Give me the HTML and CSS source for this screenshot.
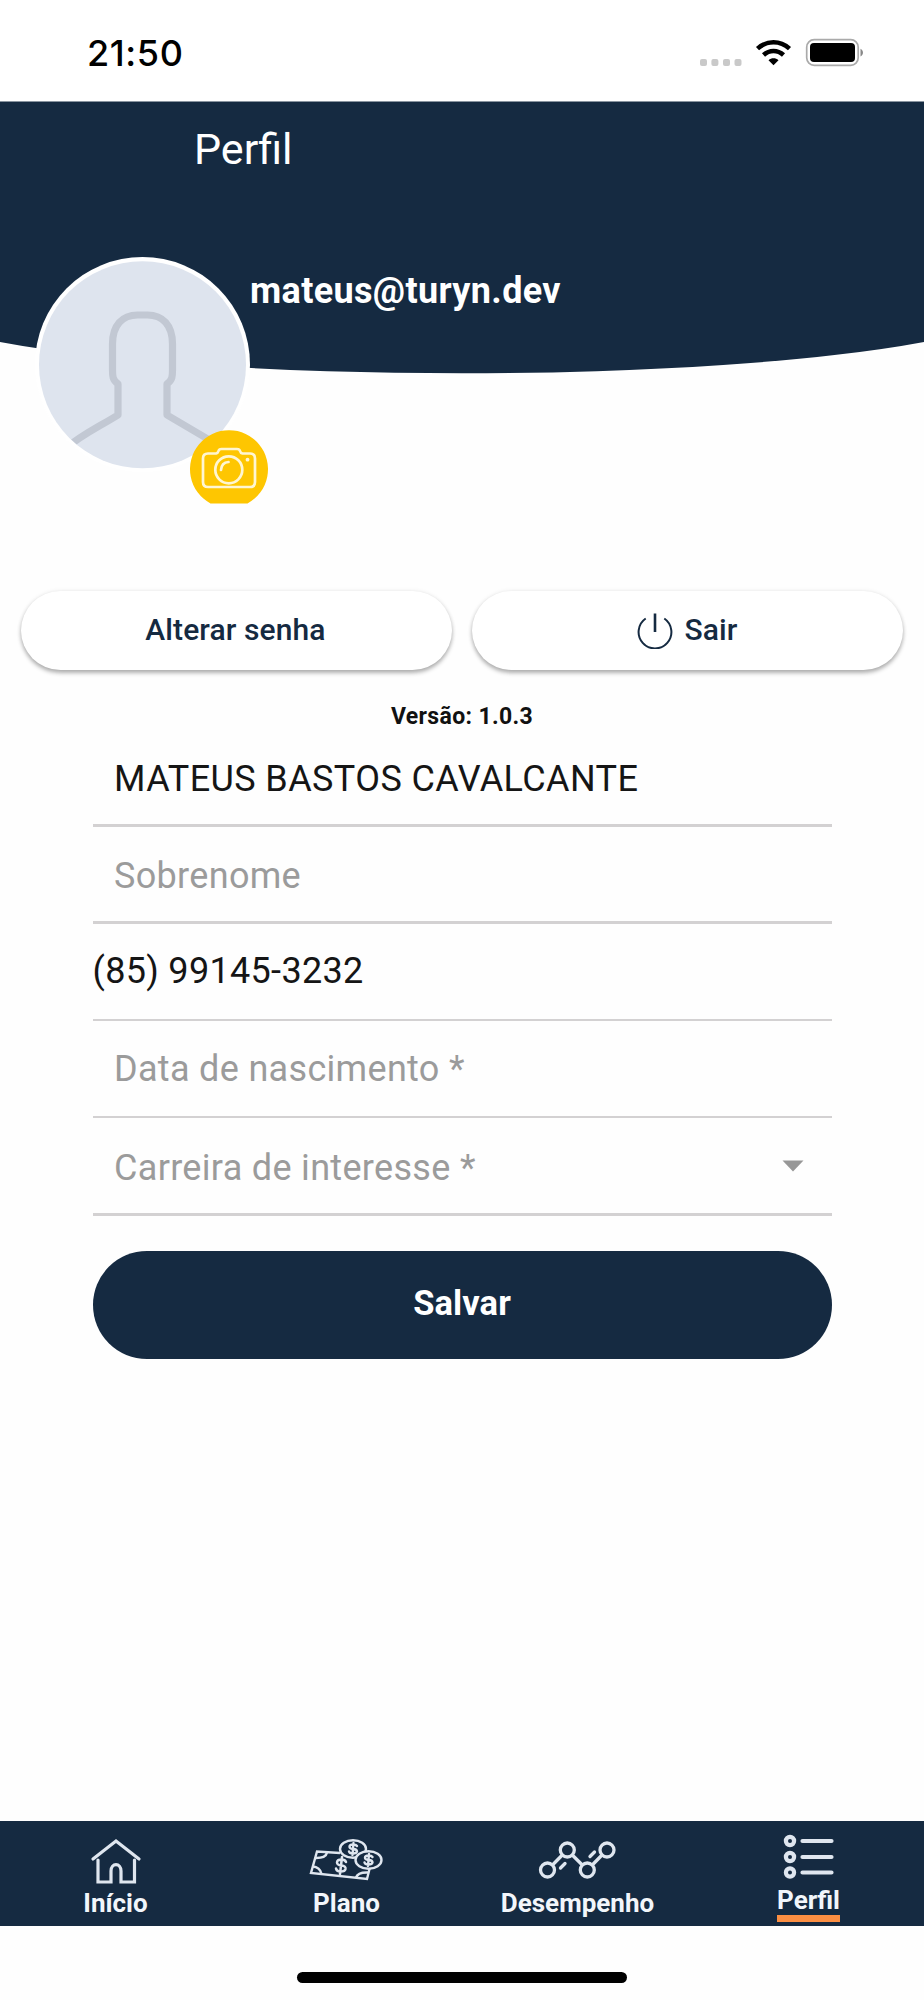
FILE: index.html
```html
<!DOCTYPE html>
<html lang="pt-BR">
<head>
<meta charset="utf-8">
<title>Perfil</title>
<link rel="stylesheet" href="styles.css">
</head>
<body>
<div class="screen">
  <div class="status">
    <span class="time">21:50</span>
    <svg class="status-icons" width="170" height="32" viewBox="0 0 170 32">
      <g fill="#c9c9c9"><rect x="2" y="21" width="7" height="7" rx="2"/><rect x="13.400" y="21" width="7" height="7" rx="2"/><rect x="25" y="21" width="7" height="7" rx="2"/><rect x="36.500" y="21" width="7" height="7" rx="2"/></g>
      <g fill="none" stroke="#000" stroke-width="4.600"><path d="M59.500 10.600C69 2.200 82 2.200 91.500 10.600"/><path d="M65.500 17C71.500 11.600 79.500 11.600 85.500 17"/></g>
      <path d="M70.500 22.300C73.500 19.700 77.500 19.700 80.500 22.300L75.500 27.300Z"/>
      <rect x="108.700" y="1.700" width="51.500" height="25.600" rx="7.500" fill="none" stroke="#aaa" stroke-width="1.700"/>
      <rect x="112" y="5" width="45" height="19" rx="4"/>
      <path d="M162.500 10.800C165.800 12.300 165.800 17 162.500 18.500Z" fill="#888"/>
    </svg>
  </div>
  <header class="hero">
    <svg class="hero-bg" width="924" height="274" viewBox="0 0 924 274"><path fill="#152a41" d="M0 0.500H924V241A560 72 0 0 1 0 241Z"/></svg>
    <h1 class="title">Perfil</h1>
    <div class="account">
      <div class="avatar">
        <svg width="216" height="216" viewBox="0 0 216 216">
          <defs><clipPath id="face"><circle cx="107.500" cy="107.500" r="103.500"/></clipPath></defs>
          <circle cx="107.500" cy="107.500" r="107.500" fill="#fff"/>
          <circle cx="107.500" cy="107.800" r="103.500" fill="#dee4ee"/>
          <path clip-path="url(#face)" d="M30 192C46 178 62 171 83 158V127C77.500 123 77.500 119 77.500 113V87C77.500 68 87.500 58 102.500 58H112.500C127.500 58 137.500 68 137.500 87V113C137.500 119 137.500 123 132 127V158L188 191" fill="none" stroke="#c2c8d3" stroke-width="7.200" stroke-linejoin="round"/>
        </svg>
        <svg class="camera" width="78" height="74" viewBox="0 0 78 74">
          <path fill="#fec601" d="M20.500 73.500A39 39 0 1 1 57.500 73.500Z"/>
          <g fill="none" stroke="#fff6d2" stroke-width="2.700" stroke-linejoin="round"><path d="M18 23.500H26Q28 23 28.500 21Q29 19 31.500 19H47Q49.500 19 50 21Q50.500 23 52.500 23.500H60Q65 23.500 65 28.500V52Q65 57 60 57H18Q13 57 13 52V28.500Q13 23.500 18 23.500Z"/><circle cx="38.800" cy="39.800" r="13.500"/><path d="M31 40Q31.500 32.500 38.500 32" stroke-linecap="round"/></g>
          <circle cx="57.500" cy="29.700" r="1.900" fill="#fff6d2"/>
        </svg>
      </div>
      <p class="email">mateus@turyn.dev</p>
    </div>
  </header>
  <div class="actions">
    <button class="pill"><span>Alterar senha</span></button>
    <button class="pill"><svg width="38" height="38" viewBox="0 0 38 38" fill="none" stroke="#152a41" stroke-width="2"><path d="M9.700 7.500A16.400 16.400 0 1 0 28.300 7.500"/><path d="M19 2.500V21" stroke-width="2.600"/></svg><span>Sair</span></button>
  </div>
  <p class="version">Versão: 1.0.3</p>
  <form class="form">
    <div class="field f-name"><span>MATEUS BASTOS CAVALCANTE</span></div>
    <div class="field f-last hint"><span>Sobrenome</span></div>
    <div class="field f-phone"><span>(85) 99145-3232</span></div>
    <div class="field f-birth hint"><span>Data de nascimento *</span></div>
    <div class="field f-career hint"><span>Carreira de interesse *</span><svg width="22" height="12" viewBox="0 0 22 12"><path d="M.5.500H21.500L11 11.500Z" fill="#979797"/></svg></div>
    <button type="button" class="save">Salvar</button>
  </form>
  <nav class="tabs">
    <a class="tab"><svg width="52" height="46" viewBox="0 0 52 46" fill="none" stroke="#dfe6ef" stroke-width="3.200" stroke-linecap="round"><path d="M3 21L26 3L49 21"/><path d="M8 22V44H21V33C21 24.500 31 24.500 31 33V44H44.500V22"/></svg><span>Início</span></a>
    <a class="tab"><svg width="76" height="46" viewBox="0 0 76 46" fill="none" stroke="#dfe6ef" stroke-width="2.400"><path d="M31 15L8 13.500L2 35L58 41L61 29"/><path d="M18 14.500Q17 20 7 20M3.500 28.500Q11 29 12.500 36M47 39.500Q49 34 59 34.500"/><ellipse cx="44" cy="11" rx="13" ry="8.700"/><ellipse cx="59.500" cy="22" rx="13" ry="8.700" fill="#152a41"/><g stroke-linecap="round"><path d="M37 24Q36 21.500 32.500 21.500Q28 21.500 28 24.500Q28 27 32.500 27.500Q37 28 36.500 31Q36 33.500 31.500 33.500Q27.500 33.500 27 30.500M33 19L31 36" stroke-width="2.500"/><path d="M48 8Q47 6.500 44 6.500Q40.500 6.500 40.500 8.800Q40.500 10.700 44 11Q48 11.300 48 13.500Q47.500 15.500 44 15.500Q40.500 15.500 40 13.500M44.500 5L43.500 17M63.500 19Q62.500 17.500 59.500 17.500Q56 17.500 56 19.800Q56 21.700 59.500 22Q63.500 22.300 63.500 24.500Q63 26.500 59.500 26.500Q56 26.500 55.500 24.500M60 16L59 28"/></g></svg><span>Plano</span></a>
    <a class="tab"><svg width="80" height="46" viewBox="0 0 80 46" fill="none" stroke="#dfe6ef" stroke-width="3.300"><circle cx="9.500" cy="32" r="7"/><circle cx="29.300" cy="12" r="7"/><circle cx="49.300" cy="32" r="7"/><circle cx="69" cy="12" r="7"/><path d="M14.500 27L24.300 17M34.300 17L44.300 27M54.300 27L64 17"/><path d="M22.500 30L27 25.500M52 18.500L56.500 14" stroke-linecap="round"/></svg><span>Desempenho</span></a>
    <a class="tab active"><svg width="52" height="46" viewBox="0 0 52 46" fill="none" stroke="#dfe6ef" stroke-width="4.200"><circle cx="7" cy="7" r="4.100"/><circle cx="7" cy="23" r="4.100"/><circle cx="7" cy="38.500" r="4.100"/><path stroke-linecap="round" d="M19.500 7H48.500M19.500 23H48.500M19.500 38.500H48.500"/></svg><span>Perfil</span></a>
  </nav>
  <div class="home"></div>
</div>
</body>
</html>
```
FILE: styles.css
```css
* { box-sizing: border-box; margin: 0; padding: 0; }
body { width: 924px; background: #fefefe; font-family: Roboto, sans-serif; }
button { border: 0; font-family: inherit; }
svg { display: block; flex: none; }
.screen { height: 2000px; display: flex; flex-direction: column; }

.status { height: 101px; padding: 31px 56px 0 87px; display: flex; justify-content: space-between; background: #fff; }
.time { font: 500 36px/44px Inter, sans-serif; letter-spacing: .6px; color: #000; }
.status-icons { margin-top: 6.500px; }

.hero { position: relative; height: 490px; color: #fff; }
.hero-bg { position: absolute; left: 0; top: 0; }
.title { position: relative; padding: 22px 0 0 194px; font-weight: 400; font-size: 43px; line-height: 52px; }
.account { position: relative; display: flex; margin-top: 82px; padding-left: 35px; }
.avatar { position: relative; width: 215px; height: 216px; }
.camera { position: absolute; left: 155px; top: 173px; }
.email { margin-top: 12px; font-weight: 700; font-size: 36px; line-height: 44px; letter-spacing: .35px; }

.actions { display: flex; gap: 20px; padding: 0 21px; }
.pill { flex: 1; height: 79px; border-radius: 40px; padding: 0 2px 2px 0; display: flex; align-items: center; justify-content: center; gap: 11px; background: #fff; color: #152a41; font-weight: 500; font-size: 30px; letter-spacing: .1px; box-shadow: 0 3px 4px rgba(0,0,0,.3), 0 0 5px rgba(0,0,0,.07); }

.version { margin-top: 34px; text-align: center; font-weight: 700; font-size: 23px; line-height: 25px; letter-spacing: .35px; color: #111; }

.form { width: 739px; margin-left: 92.500px; color: #151515; }
.field { display: flex; justify-content: space-between; height: 97px; padding: 29px 22px 0 21.500px; border-bottom: 3px solid #d3d1d2; font-size: 36px; line-height: 42px; letter-spacing: .32px; }
.f-name { height: 98px; letter-spacing: .4px; }
.f-last { padding-top: 28px; }
.f-phone { padding-top: 26px; padding-left: 0; border-bottom-width: 2px; }
.f-birth { padding-top: 27px; border-bottom-width: 2px; }
.f-career { height: 98px; }
.f-career svg { margin: 13px 6px 0 0; }
.hint { color: #9b9b9b; }
.save { display: block; width: 100%; height: 108px; padding-bottom: 3px; margin-top: 34.500px; border-radius: 54px; background: #152a41; color: #fff; font-weight: 700; font-size: 34.500px; letter-spacing: .1px; }

.tabs { display: grid; grid-template-columns: repeat(4, 1fr); height: 105px; margin-top: auto; background: #152a41; color: #f2f6fb; }
.tab { display: flex; flex-direction: column; align-items: center; padding-top: 17px; font-weight: 700; font-size: 26px; line-height: 32px; }
.tab span { margin-top: 3px; }
.tab.active { padding-top: 13px; }
.tab.active span { margin-top: 5px; line-height: 30px; border-bottom: 7px solid #fb8e42; }
.home { width: 330px; height: 11px; margin: 46px auto 17px; border-radius: 6px; background: #000; }
```
